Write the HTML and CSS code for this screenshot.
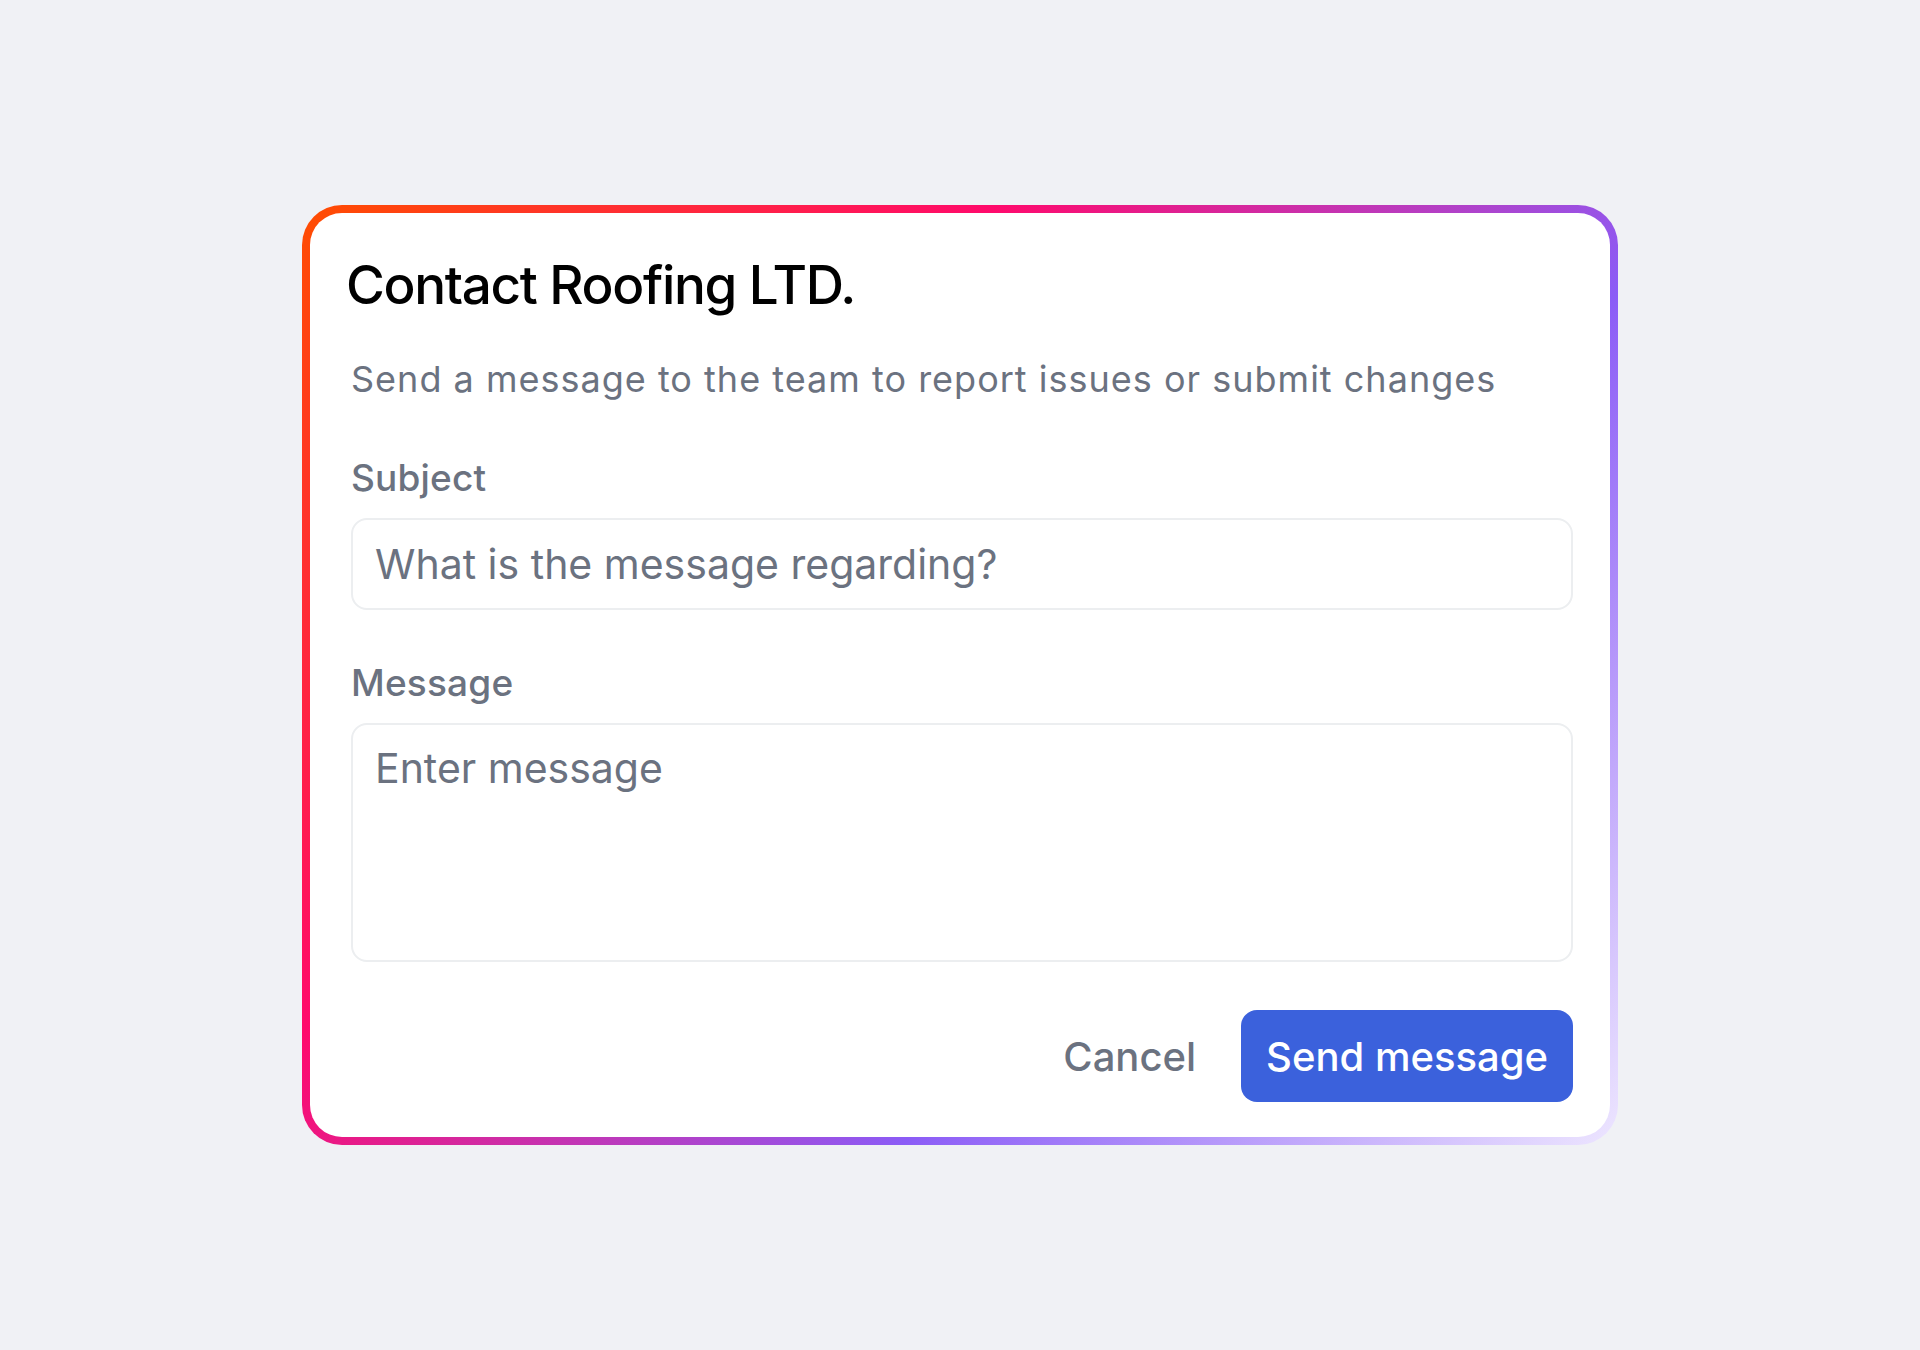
FILE: index.html
```html
<!DOCTYPE html>
<html lang="en">
<head>
<meta charset="utf-8">
<title>Contact Roofing LTD.</title>
<link rel="stylesheet" href="styles.css">
</head>
<body>
<main class="page">
  <div class="card-frame">
    <form class="card">
      <h1 class="title">Contact Roofing LTD.</h1>
      <p class="subtitle">Send a message to the team to report issues or submit changes</p>
      <div class="field">
        <label class="label" for="subject">Subject</label>
        <input class="input" id="subject" type="text" placeholder="What is the message regarding?">
      </div>
      <div class="field field-message">
        <label class="label" for="message">Message</label>
        <textarea class="input textarea" id="message" placeholder="Enter message"></textarea>
      </div>
      <div class="actions">
        <button class="btn btn-cancel" type="button">Cancel</button>
        <button class="btn btn-primary" type="submit">Send message</button>
      </div>
    </form>
  </div>
</main>
</body>
</html>
```

FILE: styles.css
```css
* {
  box-sizing: border-box;
}

html, body {
  margin: 0;
  padding: 0;
}

body {
  background: #f0f1f5;
  font-family: Inter, "Noto Sans", "Liberation Sans", sans-serif;
  color: #111;
}

.page {
  min-height: 1350px;
  display: flex;
  align-items: center;
  justify-content: center;
}

.card-frame {
  width: 1316px;
  padding: 8px;
  border-radius: 40px;
  background: linear-gradient(130deg, #ff4d00 0%, #ff0a6c 33%, #8b5cf6 66%, #ede6ff 100%);
}

.card {
  background: #ffffff;
  border-radius: 32px;
  padding: 41px 37px 35px 41px;
  display: flex;
  flex-direction: column;
}

.title {
  margin: 0 0 0 -5px;
  font-size: 53px;
  line-height: 62px;
  font-weight: 500;
  letter-spacing: -0.025em;
  color: #000;
}

.subtitle {
  margin: 41px 0 0 0;
  font-size: 36px;
  line-height: 44px;
  font-weight: 400;
  letter-spacing: 0.028em;
  color: #6b7280;
}

.field {
  display: flex;
  flex-direction: column;
  gap: 18px;
  margin-top: 55px;
}

.field-message {
  margin-top: 51px;
}

.label {
  font-size: 37px;
  line-height: 44px;
  font-weight: 500;
  letter-spacing: 0.005em;
  color: #6b7280;
}

.input {
  width: 100%;
  height: 92px;
  border: 2px solid #eceef0;
  border-radius: 16px;
  background: #fff;
  padding: 0 22px;
  font-family: inherit;
  font-size: 41px;
  color: #374151;
  outline: none;
}

.input::placeholder {
  color: #6b7280;
  opacity: 1;
}

.textarea {
  height: 239px;
  padding: 15px 22px;
  line-height: 56px;
  resize: none;
}

.actions {
  display: flex;
  justify-content: flex-end;
  align-items: center;
  gap: 20px;
  margin-top: 48px;
}

.btn {
  height: 92px;
  border: none;
  border-radius: 16px;
  font-family: inherit;
  font-size: 40px;
  font-weight: 500;
  padding: 0 25px;
  cursor: pointer;
}

.btn-cancel {
  background: transparent;
  color: #6b7280;
}

.btn-primary {
  background: #3b61dc;
  color: #ffffff;
}
```
